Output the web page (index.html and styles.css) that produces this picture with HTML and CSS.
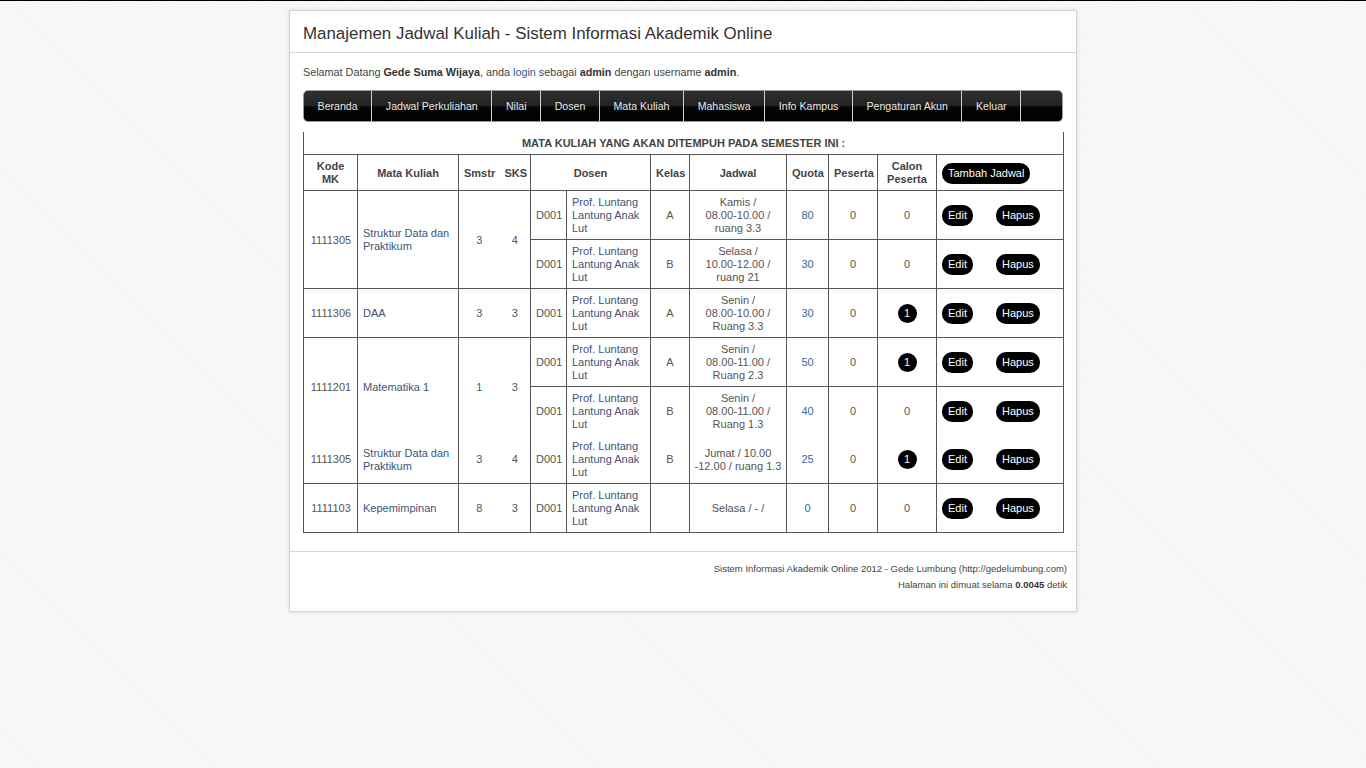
FILE: index.html
```html
<!DOCTYPE html>
<html>
<head>
<meta charset="utf-8">
<title>Manajemen Jadwal Kuliah</title>
<link rel="stylesheet" href="styles.css">
</head>
<body>
<div class="topline"></div>
<div class="wrap">
  <div class="head"><h1>Manajemen Jadwal Kuliah - Sistem Informasi Akademik Online</h1></div>
  <div class="content">
    <p class="welcome">Selamat Datang <b>Gede Suma Wijaya</b>, anda <a href="#">login</a> sebagai <b>admin</b> dengan username <b>admin</b>.</p>
    <div class="nav">
      <a href="#">Beranda</a><a href="#">Jadwal Perkuliahan</a><a href="#">Nilai</a><a href="#">Dosen</a><a href="#">Mata Kuliah</a><a href="#">Mahasiswa</a><a href="#">Info Kampus</a><a href="#">Pengaturan Akun</a><a href="#">Keluar</a>
    </div>
    <table class="grid">
      <colgroup>
        <col class="c-kode"><col class="c-mk"><col class="c-sm"><col class="c-sks"><col class="c-did"><col class="c-dn"><col class="c-kls"><col class="c-jd"><col class="c-q"><col class="c-p"><col class="c-cp"><col class="c-act">
      </colgroup>
      <tr><th colspan="12" class="cap">MATA KULIAH YANG AKAN DITEMPUH PADA SEMESTER INI :</th></tr>
      <tr>
        <th>Kode<br>MK</th><th>Mata Kuliah</th><th class="sm">Smstr</th><th class="sks">SKS</th><th colspan="2">Dosen</th><th>Kelas</th><th>Jadwal</th><th>Quota</th><th>Peserta</th><th>Calon<br>Peserta</th>
        <th class="act"><a class="btn" href="#">Tambah Jadwal</a></th>
      </tr>
      <tr>
        <td rowspan="2" class="kode">1111305</td><td rowspan="2" class="mk"><a href="#">Struktur Data dan Praktikum</a></td><td rowspan="2" class="sm">3</td><td rowspan="2" class="sks">4</td>
        <td>D001</td><td class="dn"><a href="#">Prof. Luntang Lantung Anak Lut</a></td><td>A</td><td class="jd">Kamis /<br>08.00-10.00 /<br>ruang 3.3</td><td class="q">80</td><td>0</td><td>0</td>
        <td class="act"><a class="btn" href="#">Edit</a><a class="btn hapus" href="#">Hapus</a></td>
      </tr>
      <tr>
        <td>D001</td><td class="dn"><a href="#">Prof. Luntang Lantung Anak Lut</a></td><td>B</td><td class="jd">Selasa /<br>10.00-12.00 /<br>ruang 21</td><td class="q">30</td><td>0</td><td>0</td>
        <td class="act"><a class="btn" href="#">Edit</a><a class="btn hapus" href="#">Hapus</a></td>
      </tr>
      <tr>
        <td class="kode">1111306</td><td class="mk"><a href="#">DAA</a></td><td class="sm">3</td><td class="sks">3</td>
        <td>D001</td><td class="dn"><a href="#">Prof. Luntang Lantung Anak Lut</a></td><td>A</td><td class="jd">Senin /<br>08.00-10.00 /<br>Ruang 3.3</td><td class="q">30</td><td>0</td><td><span class="badge">1</span></td>
        <td class="act"><a class="btn" href="#">Edit</a><a class="btn hapus" href="#">Hapus</a></td>
      </tr>
      <tr>
        <td rowspan="2" class="kode nb">1111201</td><td rowspan="2" class="mk nb"><a href="#">Matematika 1</a></td><td rowspan="2" class="sm nb">1</td><td rowspan="2" class="sks nb">3</td>
        <td>D001</td><td class="dn"><a href="#">Prof. Luntang Lantung Anak Lut</a></td><td>A</td><td class="jd">Senin /<br>08.00-11.00 /<br>Ruang 2.3</td><td class="q">50</td><td>0</td><td><span class="badge">1</span></td>
        <td class="act"><a class="btn" href="#">Edit</a><a class="btn hapus" href="#">Hapus</a></td>
      </tr>
      <tr>
        <td class="nb">D001</td><td class="dn nb"><a href="#">Prof. Luntang Lantung Anak Lut</a></td><td class="nb">B</td><td class="jd nb">Senin /<br>08.00-11.00 /<br>Ruang 1.3</td><td class="q nb">40</td><td class="nb">0</td><td class="nb">0</td>
        <td class="act nb"><a class="btn" href="#">Edit</a><a class="btn hapus" href="#">Hapus</a></td>
      </tr>
      <tr class="nt">
        <td class="kode">1111305</td><td class="mk"><a href="#">Struktur Data dan Praktikum</a></td><td class="sm">3</td><td class="sks">4</td>
        <td>D001</td><td class="dn"><a href="#">Prof. Luntang Lantung Anak Lut</a></td><td>B</td><td class="jd">Jumat / 10.00<br>-12.00 / ruang 1.3</td><td class="q">25</td><td>0</td><td><span class="badge">1</span></td>
        <td class="act"><a class="btn" href="#">Edit</a><a class="btn hapus" href="#">Hapus</a></td>
      </tr>
      <tr>
        <td class="kode">1111103</td><td class="mk"><a href="#">Kepemimpinan</a></td><td class="sm">8</td><td class="sks">3</td>
        <td>D001</td><td class="dn"><a href="#">Prof. Luntang Lantung Anak Lut</a></td><td></td><td class="jd">Selasa / - /</td><td class="q">0</td><td>0</td><td>0</td>
        <td class="act"><a class="btn" href="#">Edit</a><a class="btn hapus" href="#">Hapus</a></td>
      </tr>
    </table>
  </div>
  <div class="foot">
    <p>Sistem Informasi Akademik Online 2012 - Gede Lumbung (http://gedelumbung.com)</p>
    <p>Halaman ini dimuat selama <b>0.0045</b> detik</p>
  </div>
</div>
</body>
</html>
```
FILE: styles.css
```css
html, body {
  margin: 0;
  padding: 0;
}
body {
  font-family: "Liberation Sans", Arial, sans-serif;
  font-size: 11px;
  color: #444;
  background-color: #f7f7f7;
  background-image: repeating-linear-gradient(45deg, #f4f4f4 0, #f4f4f4 1px, #f8f8f8 1px, #f8f8f8 4px);
  min-height: 768px;
}
a { text-decoration: none; }
.topline {
  height: 1px;
  background: #000;
}
.wrap {
  width: 786px;
  margin: 9px auto 0;
  background: #fff;
  border: 1px solid #d4d4d4;
  box-shadow: 0 0 4px rgba(0,0,0,0.12);
}
.head {
  border-bottom: 1px solid #d6d6d6;
  padding: 12px 13px 8px;
}
.head h1 {
  margin: 0;
  font-size: 16.9px;
  font-weight: normal;
  color: #333;
  line-height: 21px;
}
.content {
  padding: 0 13px 18px;
}
.welcome {
  margin: 12px 0 11px;
  line-height: 14px;
  font-size: 10.8px;
  color: #444;
}
.welcome b { color: #333; }
.welcome a { color: #2f5d8c; }
.nav {
  display: flex;
  height: 30px;
  border: 1px solid #9a9a9a;
  border-radius: 5px;
  background: linear-gradient(#303030 0, #222 50%, #060606 52%, #000 100%);
  overflow: hidden;
}
.nav a {
  display: block;
  padding: 0 13.6px;
  line-height: 30px;
  color: #e8e8e8;
  font-size: 10.6px;
  border-right: 1px solid #cfcfcf;
}
.grid {
  width: 760px;
  margin-top: 10px;
  border-collapse: collapse;
  table-layout: fixed;
}
.c-kode { width: 54px; }
.c-mk { width: 101px; }
.c-sm { width: 41px; }
.c-sks { width: 31px; }
.c-did { width: 36px; }
.c-dn { width: 84px; }
.c-kls { width: 39px; }
.c-jd { width: 97px; }
.c-q { width: 42px; }
.c-p { width: 49px; }
.c-cp { width: 59px; }
.c-act { width: 127px; }
.grid th, .grid td {
  border: 1px solid #555;
  padding: 5px 5px 4px;
  line-height: 13px;
  text-align: center;
  vertical-align: middle;
  font-size: 11px;
}
.grid th {
  font-weight: bold;
  color: #444;
}
.grid th.cap {
  border-top: none;
}
.grid td { color: #555; }
.grid .sm { border-right: none; }
.grid .sks { border-left: none; }
.grid td.mk, .grid td.dn { text-align: left; }
.grid td.kode { padding-left: 5px; padding-right: 4px; }
.grid td.jd { padding-left: 3px; padding-right: 3px; }
.grid td a { color: #3a5577; }
.grid td.q { color: #3a6a9a; }
.grid td.nb { border-bottom: none; }
.grid tr.nt td { border-top: none; }
.grid td.act, .grid th.act {
  text-align: left;
  padding-left: 5px;
}
.btn {
  display: inline-block;
  background: #000;
  color: #fff !important;
  border-radius: 10px;
  padding: 4px 6px;
  line-height: 13px;
  font-weight: normal;
}
.hapus {
  margin-left: 23px;
}
.badge {
  display: inline-block;
  width: 19px;
  height: 19px;
  line-height: 19px;
  border-radius: 50%;
  background: #000;
  color: #fff;
  text-align: center;
}
.foot {
  border-top: 1px solid #d6d6d6;
  padding: 9px 9px 18px;
  text-align: right;
  font-size: 9.5px;
  color: #444;
}
.foot p {
  margin: 0;
  line-height: 16px;
}
.foot b { color: #333; }
```
